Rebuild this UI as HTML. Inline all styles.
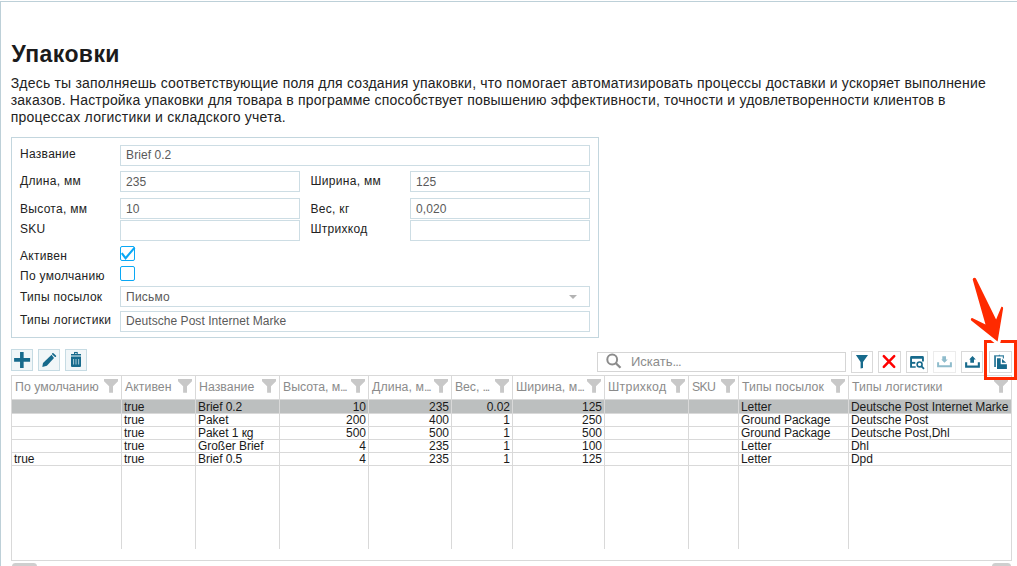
<!DOCTYPE html>
<html><head><meta charset="utf-8"><style>
html,body{margin:0;padding:0;}
body{width:1017px;height:566px;position:relative;overflow:hidden;background:#fff;font-family:"Liberation Sans", sans-serif;}
.t{position:absolute;white-space:nowrap;}
.r{position:absolute;}
</style></head><body>
<div class="r" style="left:0px;top:1px;width:1017px;height:1px;background:#bdd0d8;"></div>
<div class="r" style="left:0px;top:1px;width:1px;height:565px;background:#bdd0d8;"></div>
<div class="t" style="left:11.5px;top:42.53px;font-size:23px;line-height:23px;color:#1b1b1b;font-weight:bold;letter-spacing:0.4px;">Упаковки</div>
<div class="t" style="left:10.7px;top:75.65px;font-size:14px;line-height:14px;color:#222;letter-spacing:0.203px;">Здесь ты заполняешь соответствующие поля для создания упаковки, что помогает автоматизировать процессы доставки и ускоряет выполнение</div>
<div class="t" style="left:10.7px;top:92.65px;font-size:14px;line-height:14px;color:#222;letter-spacing:0.184px;">заказов. Настройка упаковки для товара в программе способствует повышению эффективности, точности и удовлетворенности клиентов в</div>
<div class="t" style="left:10.7px;top:109.65px;font-size:14px;line-height:14px;color:#222;letter-spacing:0.24px;">процессах логистики и складского учета.</div>
<div class="r" style="left:11px;top:137px;width:588px;height:201px;border:1px solid #c3d6de;box-sizing:border-box;"></div>
<div class="t" style="left:20px;top:147.94px;font-size:12px;line-height:12px;color:#222;letter-spacing:0.3px;">Название</div>
<div class="t" style="left:20px;top:175.44px;font-size:12px;line-height:12px;color:#222;letter-spacing:0.3px;">Длина, мм</div>
<div class="t" style="left:20px;top:202.64px;font-size:12px;line-height:12px;color:#222;letter-spacing:0.3px;">Высота, мм</div>
<div class="t" style="left:20px;top:223.14px;font-size:12px;line-height:12px;color:#222;letter-spacing:0.3px;">SKU</div>
<div class="t" style="left:20px;top:250.34px;font-size:12px;line-height:12px;color:#222;letter-spacing:0.3px;">Активен</div>
<div class="t" style="left:20px;top:270.04px;font-size:12px;line-height:12px;color:#222;letter-spacing:0.3px;">По умолчанию</div>
<div class="t" style="left:20px;top:290.54px;font-size:12px;line-height:12px;color:#222;letter-spacing:0.3px;">Типы посылок</div>
<div class="t" style="left:20px;top:314.44px;font-size:12px;line-height:12px;color:#222;letter-spacing:0.3px;">Типы логистики</div>
<div class="t" style="left:310.5px;top:175.44px;font-size:12px;line-height:12px;color:#222;letter-spacing:0.3px;">Ширина, мм</div>
<div class="t" style="left:310.5px;top:202.64px;font-size:12px;line-height:12px;color:#222;letter-spacing:0.3px;">Вес, кг</div>
<div class="t" style="left:310.5px;top:223.14px;font-size:12px;line-height:12px;color:#222;letter-spacing:0.3px;">Штрихкод</div>
<div class="r" style="left:120px;top:145px;width:470px;height:21px;border:1px solid #cddde4;box-sizing:border-box;background:#fff;"></div><div class="t" style="left:126.1px;top:149.14px;font-size:12px;line-height:12px;color:#5a5a5a;letter-spacing:0.05px;">Brief 0.2</div>
<div class="r" style="left:120px;top:171px;width:180px;height:21px;border:1px solid #cddde4;box-sizing:border-box;background:#fff;"></div><div class="t" style="left:126.1px;top:176.14px;font-size:12px;line-height:12px;color:#5a5a5a;letter-spacing:0.05px;">235</div>
<div class="r" style="left:410px;top:171px;width:180px;height:21px;border:1px solid #cddde4;box-sizing:border-box;background:#fff;"></div><div class="t" style="left:416.1px;top:176.14px;font-size:12px;line-height:12px;color:#5a5a5a;letter-spacing:0.05px;">125</div>
<div class="r" style="left:120px;top:198px;width:180px;height:21px;border:1px solid #cddde4;box-sizing:border-box;background:#fff;"></div><div class="t" style="left:126.1px;top:202.84px;font-size:12px;line-height:12px;color:#5a5a5a;letter-spacing:0.05px;">10</div>
<div class="r" style="left:410px;top:198px;width:180px;height:21px;border:1px solid #cddde4;box-sizing:border-box;background:#fff;"></div><div class="t" style="left:416.1px;top:202.84px;font-size:12px;line-height:12px;color:#5a5a5a;letter-spacing:0.05px;">0,020</div>
<div class="r" style="left:120px;top:220px;width:180px;height:21px;border:1px solid #cddde4;box-sizing:border-box;background:#fff;"></div>
<div class="r" style="left:410px;top:220px;width:180px;height:21px;border:1px solid #cddde4;box-sizing:border-box;background:#fff;"></div>
<div class="r" style="left:120px;top:246px;width:15px;height:15px;border:1.5px solid #0aa8f5;box-sizing:border-box;border-radius:2px;background:#fff;"></div>
<svg class="r" style="left:120px;top:245px" width="16" height="16" viewBox="0 0 16 16"><path d="M1.8 8.2 L5.6 13.2 L14.6 2.6" fill="none" stroke="#0aa8f5" stroke-width="2.1"/></svg>
<div class="r" style="left:120px;top:266px;width:15px;height:15px;border:1.5px solid #0aa8f5;box-sizing:border-box;border-radius:2px;background:#fff;"></div>
<div class="r" style="left:120px;top:286px;width:470px;height:21px;border:1px solid #cddde4;box-sizing:border-box;background:#fff;"></div><div class="t" style="left:126.1px;top:290.94px;font-size:12px;line-height:12px;color:#5a5a5a;letter-spacing:0.2px;">Письмо</div>
<svg class="r" style="left:567px;top:293px" width="12" height="8" viewBox="0 0 12 8"><path d="M2 2 L10 2 L6 6 Z" fill="#b3b3b3"/></svg>
<div class="r" style="left:120px;top:311px;width:470px;height:21px;border:1px solid #cddde4;box-sizing:border-box;background:#fff;"></div><div class="t" style="left:126.1px;top:315.14px;font-size:12px;line-height:12px;color:#5a5a5a;letter-spacing:0.05px;">Deutsche Post Internet Marke</div>
<div class="r" style="left:11px;top:349px;width:22px;height:22px;border:1px solid #c6dbe3;box-sizing:border-box;background:#f1f6f8;"></div>
<div class="r" style="left:38px;top:349px;width:22px;height:22px;border:1px solid #c6dbe3;box-sizing:border-box;background:#f1f6f8;"></div>
<div class="r" style="left:65px;top:349px;width:22px;height:22px;border:1px solid #c6dbe3;box-sizing:border-box;background:#f1f6f8;"></div>
<svg class="r" style="left:11px;top:349px" width="22" height="22" viewBox="0 0 22 22"><path d="M3.1 10.9 H19.1 M10.85 3.1 V19.1" stroke="#176a8c" stroke-width="3.6" fill="none"/></svg>
<svg class="r" style="left:38px;top:349px" width="22" height="22" viewBox="0 0 22 22"><path d="M4.3 17.9 L5 14 L13.6 5.8 L16 9.1 L8.9 16.7 Z" fill="#176a8c"/><path d="M14.9 4.9 L17.3 7.1" stroke="#176a8c" stroke-width="1.8" stroke-linecap="round"/></svg>
<svg class="r" style="left:65px;top:349px" width="22" height="22" viewBox="0 0 22 22"><rect x="9.6" y="3.5" width="2.6" height="2" fill="none" stroke="#176a8c" stroke-width="1.1"/><rect x="6" y="5" width="10" height="1.5" fill="#176a8c"/><rect x="6" y="6.5" width="10" height="1.5" fill="#7fb0c2"/><path d="M6 8 H16 V17 Q16 17.9 15 17.9 H7 Q6 17.9 6 17 Z" fill="#176a8c"/><path d="M8.55 9.9 V15.6 M11 9.9 V15.6 M13.6 9.9 V15.6" stroke="#9cc3d1" stroke-width="1.1"/></svg>
<div class="r" style="left:596.5px;top:352px;width:249.5px;height:20px;border:1px solid #d5d5d5;box-sizing:border-box;background:#fff;"></div>
<svg class="r" style="left:604px;top:352px" width="20" height="18" viewBox="0 0 20 18"><circle cx="8.2" cy="7.5" r="4.9" fill="none" stroke="#8c8c8c" stroke-width="2"/><path d="M11.6 11 L16.5 15.8" stroke="#8c8c8c" stroke-width="2.3"/></svg>
<div class="t" style="left:631px;top:355.00px;font-size:13px;line-height:13px;color:#8c8c8c;">Искать<span style="letter-spacing:-0.9px">...</span></div>
<div class="r" style="left:851px;top:351px;width:22px;height:22px;border:1px solid #d9d9d9;box-sizing:border-box;background:#fff;"></div>
<div class="r" style="left:878px;top:351px;width:22.600000000000023px;height:22px;border:1px solid #d9d9d9;box-sizing:border-box;background:#fff;"></div>
<div class="r" style="left:906px;top:351px;width:22px;height:22px;border:1px solid #d9d9d9;box-sizing:border-box;background:#fff;"></div>
<div class="r" style="left:933px;top:351px;width:22.600000000000023px;height:22px;border:1px solid #ececec;box-sizing:border-box;background:#fff;"></div>
<div class="r" style="left:961px;top:351px;width:22.299999999999955px;height:22px;border:1px solid #d9d9d9;box-sizing:border-box;background:#fff;"></div>
<div class="r" style="left:989px;top:351px;width:22.700000000000045px;height:22px;border:1px solid #d9d9d9;box-sizing:border-box;background:#fff;"></div>
<svg class="r" style="left:851px;top:351px" width="22" height="22" viewBox="0 0 22 22"><path d="M4.9 4 H17 L12 11 V17 L9.6 17.6 V11 Z" fill="#176a8c"/></svg>
<svg class="r" style="left:878px;top:351px" width="22" height="22" viewBox="0 0 22 22"><path d="M5.8 5.2 L16.2 15.8 M16.2 5.2 L5.8 15.8" stroke="#ff0000" stroke-width="2.5" stroke-linecap="round"/></svg>
<svg class="r" style="left:906px;top:351px" width="22" height="22" viewBox="0 0 22 22"><path d="M4.1 16.7 V6.5 Q4.1 5.1 5.5 5.1 H16.5 Q17.9 5.1 17.9 6.5 V10.5 H16 V7.8 H6 V15.2 H9.7 V16.7 Z" fill="#176a8c"/><rect x="6" y="10.9" width="3.3" height="1.9" fill="#176a8c"/><circle cx="13.6" cy="13.4" r="2.45" fill="none" stroke="#176a8c" stroke-width="1.6"/><path d="M15.3 15.2 L18 17.9" stroke="#176a8c" stroke-width="1.8"/></svg>
<svg class="r" style="left:933px;top:351px" width="22" height="22" viewBox="0 0 22 22"><path d="M4.1 11.3 H6.1 V14.3 H16.9 V11.3 H18.9 V16.3 H4.1 Z" fill="#8fbccc"/><path d="M9.3 5.25 H13 V8.4 H14.8 L11.5 11.7 L8.2 8.4 H9.3 Z" fill="#8fbccc"/></svg>
<svg class="r" style="left:961px;top:351px" width="22" height="22" viewBox="0 0 22 22"><path d="M4.1 11.3 H6.2 V14.4 H16.8 V11.3 H18.9 V16.7 H4.1 Z" fill="#176a8c"/><path d="M11.5 5 L14.8 8.6 H13 V11.7 H9.3 V8.6 H8.2 Z" fill="#176a8c"/></svg>
<svg class="r" style="left:989px;top:351px" width="22" height="22" viewBox="0 0 22 22"><path d="M5.1 16 V4.2 H9.5 L10.3 3.6 L11.1 4.2 H15 V7.5 H13.8 V5.4 H7 V16 Z" fill="#3a82a0"/><path d="M8 7.2 H11.7 V13.2 H17.9 V17.9 H8 Z" fill="#176a8c"/><path d="M13 8 L17.2 11.7 H13 Z" fill="#176a8c"/></svg>
<div class="r" style="left:11px;top:375px;width:1001px;height:186px;border:1px solid #d9d9d9;box-sizing:border-box;background:#fff;"></div>
<div class="r" style="left:12px;top:399px;width:999px;height:1px;background:#d9d9d9;"></div>
<div class="r" style="left:12px;top:400px;width:999px;height:13px;background:#bcbfbf;"></div>
<div class="r" style="left:12px;top:413px;width:999px;height:1px;background:#d9d9d9;"></div>
<div class="r" style="left:12px;top:426px;width:999px;height:1px;background:#d9d9d9;"></div>
<div class="r" style="left:12px;top:439px;width:999px;height:1px;background:#d9d9d9;"></div>
<div class="r" style="left:12px;top:452px;width:999px;height:1px;background:#d9d9d9;"></div>
<div class="r" style="left:12px;top:465px;width:999px;height:1px;background:#d9d9d9;"></div>
<div class="r" style="left:121px;top:376px;width:1px;height:173px;background:#d9d9d9;"></div>
<div class="r" style="left:195px;top:376px;width:1px;height:173px;background:#d9d9d9;"></div>
<div class="r" style="left:279px;top:376px;width:1px;height:173px;background:#d9d9d9;"></div>
<div class="r" style="left:368px;top:376px;width:1px;height:173px;background:#d9d9d9;"></div>
<div class="r" style="left:451px;top:376px;width:1px;height:173px;background:#d9d9d9;"></div>
<div class="r" style="left:512px;top:376px;width:1px;height:173px;background:#d9d9d9;"></div>
<div class="r" style="left:604px;top:376px;width:1px;height:173px;background:#d9d9d9;"></div>
<div class="r" style="left:688px;top:376px;width:1px;height:173px;background:#d9d9d9;"></div>
<div class="r" style="left:738px;top:376px;width:1px;height:173px;background:#d9d9d9;"></div>
<div class="r" style="left:848px;top:376px;width:1px;height:173px;background:#d9d9d9;"></div>
<div class="t" style="left:15px;top:380.59px;font-size:12.3px;line-height:12.3px;color:#8b8b8b;letter-spacing:0.05px;">По умолчанию</div>
<svg class="r" style="left:104px;top:379px" width="14" height="14" viewBox="0 0 14 14"><path d="M0 0 H14 V2.3 L9 7.2 V13.8 H5.1 V7.2 L0 2.3 Z" fill="#c8c8c8"/></svg>
<div class="t" style="left:125px;top:380.59px;font-size:12.3px;line-height:12.3px;color:#8b8b8b;letter-spacing:0.05px;">Активен</div>
<svg class="r" style="left:178px;top:379px" width="14" height="14" viewBox="0 0 14 14"><path d="M0 0 H14 V2.3 L9 7.2 V13.8 H5.1 V7.2 L0 2.3 Z" fill="#c8c8c8"/></svg>
<div class="t" style="left:199px;top:380.59px;font-size:12.3px;line-height:12.3px;color:#8b8b8b;letter-spacing:0.05px;">Название</div>
<svg class="r" style="left:262px;top:379px" width="14" height="14" viewBox="0 0 14 14"><path d="M0 0 H14 V2.3 L9 7.2 V13.8 H5.1 V7.2 L0 2.3 Z" fill="#c8c8c8"/></svg>
<div class="t" style="left:283px;top:380.59px;font-size:12.3px;line-height:12.3px;color:#8b8b8b;letter-spacing:-0.05px;">Высота, м<span style="letter-spacing:-1.3px">...</span></div>
<svg class="r" style="left:351px;top:379px" width="14" height="14" viewBox="0 0 14 14"><path d="M0 0 H14 V2.3 L9 7.2 V13.8 H5.1 V7.2 L0 2.3 Z" fill="#c8c8c8"/></svg>
<div class="t" style="left:372px;top:380.59px;font-size:12.3px;line-height:12.3px;color:#8b8b8b;letter-spacing:0.1px;">Длина, м<span style="letter-spacing:-1.3px">...</span></div>
<svg class="r" style="left:434px;top:379px" width="14" height="14" viewBox="0 0 14 14"><path d="M0 0 H14 V2.3 L9 7.2 V13.8 H5.1 V7.2 L0 2.3 Z" fill="#c8c8c8"/></svg>
<div class="t" style="left:455px;top:380.59px;font-size:12.3px;line-height:12.3px;color:#8b8b8b;letter-spacing:-0.1px;">Вес, <span style="letter-spacing:-1.3px">...</span></div>
<svg class="r" style="left:495px;top:379px" width="14" height="14" viewBox="0 0 14 14"><path d="M0 0 H14 V2.3 L9 7.2 V13.8 H5.1 V7.2 L0 2.3 Z" fill="#c8c8c8"/></svg>
<div class="t" style="left:516px;top:380.59px;font-size:12.3px;line-height:12.3px;color:#8b8b8b;letter-spacing:0.05px;">Ширина, м<span style="letter-spacing:-1.3px">...</span></div>
<svg class="r" style="left:587px;top:379px" width="14" height="14" viewBox="0 0 14 14"><path d="M0 0 H14 V2.3 L9 7.2 V13.8 H5.1 V7.2 L0 2.3 Z" fill="#c8c8c8"/></svg>
<div class="t" style="left:608px;top:380.59px;font-size:12.3px;line-height:12.3px;color:#8b8b8b;letter-spacing:0.3px;">Штрихкод</div>
<svg class="r" style="left:671px;top:379px" width="14" height="14" viewBox="0 0 14 14"><path d="M0 0 H14 V2.3 L9 7.2 V13.8 H5.1 V7.2 L0 2.3 Z" fill="#c8c8c8"/></svg>
<div class="t" style="left:692px;top:380.59px;font-size:12.3px;line-height:12.3px;color:#8b8b8b;letter-spacing:-0.7px;">SKU</div>
<svg class="r" style="left:721px;top:379px" width="14" height="14" viewBox="0 0 14 14"><path d="M0 0 H14 V2.3 L9 7.2 V13.8 H5.1 V7.2 L0 2.3 Z" fill="#c8c8c8"/></svg>
<div class="t" style="left:742px;top:380.59px;font-size:12.3px;line-height:12.3px;color:#8b8b8b;letter-spacing:0.1px;">Типы посылок</div>
<svg class="r" style="left:831px;top:379px" width="14" height="14" viewBox="0 0 14 14"><path d="M0 0 H14 V2.3 L9 7.2 V13.8 H5.1 V7.2 L0 2.3 Z" fill="#c8c8c8"/></svg>
<div class="t" style="left:852px;top:380.59px;font-size:12.3px;line-height:12.3px;color:#8b8b8b;letter-spacing:0.1px;">Типы логистики</div>
<svg class="r" style="left:994px;top:379px" width="14" height="14" viewBox="0 0 14 14"><path d="M0 0 H14 V2.3 L9 7.2 V13.8 H5.1 V7.2 L0 2.3 Z" fill="#c8c8c8"/></svg>
<div class="t" style="left:124px;top:401.44px;font-size:12px;line-height:12px;color:#1a1a1a;letter-spacing:-0.05px;">true</div>
<div class="t" style="left:198px;top:401.44px;font-size:12px;line-height:12px;color:#1a1a1a;letter-spacing:-0.05px;">Brief 0.2</div>
<div class="t" style="right:651px;top:401.44px;font-size:12px;line-height:12px;color:#1a1a1a;">10</div>
<div class="t" style="right:568px;top:401.44px;font-size:12px;line-height:12px;color:#1a1a1a;">235</div>
<div class="t" style="right:507px;top:401.44px;font-size:12px;line-height:12px;color:#1a1a1a;">0.02</div>
<div class="t" style="right:415px;top:401.44px;font-size:12px;line-height:12px;color:#1a1a1a;">125</div>
<div class="t" style="left:741px;top:401.44px;font-size:12px;line-height:12px;color:#1a1a1a;letter-spacing:-0.05px;">Letter</div>
<div class="t" style="left:851px;top:401.44px;font-size:12px;line-height:12px;color:#1a1a1a;letter-spacing:-0.05px;">Deutsche Post Internet Marke</div>
<div class="t" style="left:124px;top:413.64px;font-size:12px;line-height:12px;color:#1a1a1a;letter-spacing:-0.05px;">true</div>
<div class="t" style="left:198px;top:413.64px;font-size:12px;line-height:12px;color:#1a1a1a;letter-spacing:-0.05px;">Paket</div>
<div class="t" style="right:651px;top:413.64px;font-size:12px;line-height:12px;color:#1a1a1a;">200</div>
<div class="t" style="right:568px;top:413.64px;font-size:12px;line-height:12px;color:#1a1a1a;">400</div>
<div class="t" style="right:507px;top:413.64px;font-size:12px;line-height:12px;color:#1a1a1a;">1</div>
<div class="t" style="right:415px;top:413.64px;font-size:12px;line-height:12px;color:#1a1a1a;">250</div>
<div class="t" style="left:741px;top:413.64px;font-size:12px;line-height:12px;color:#1a1a1a;letter-spacing:-0.05px;">Ground Package</div>
<div class="t" style="left:851px;top:413.64px;font-size:12px;line-height:12px;color:#1a1a1a;letter-spacing:-0.05px;">Deutsche Post</div>
<div class="t" style="left:124px;top:426.84px;font-size:12px;line-height:12px;color:#1a1a1a;letter-spacing:-0.05px;">true</div>
<div class="t" style="left:198px;top:426.84px;font-size:12px;line-height:12px;color:#1a1a1a;letter-spacing:-0.05px;">Paket 1 кg</div>
<div class="t" style="right:651px;top:426.84px;font-size:12px;line-height:12px;color:#1a1a1a;">500</div>
<div class="t" style="right:568px;top:426.84px;font-size:12px;line-height:12px;color:#1a1a1a;">500</div>
<div class="t" style="right:507px;top:426.84px;font-size:12px;line-height:12px;color:#1a1a1a;">1</div>
<div class="t" style="right:415px;top:426.84px;font-size:12px;line-height:12px;color:#1a1a1a;">500</div>
<div class="t" style="left:741px;top:426.84px;font-size:12px;line-height:12px;color:#1a1a1a;letter-spacing:-0.05px;">Ground Package</div>
<div class="t" style="left:851px;top:426.84px;font-size:12px;line-height:12px;color:#1a1a1a;letter-spacing:-0.05px;">Deutsche Post,Dhl</div>
<div class="t" style="left:124px;top:440.04px;font-size:12px;line-height:12px;color:#1a1a1a;letter-spacing:-0.05px;">true</div>
<div class="t" style="left:198px;top:440.04px;font-size:12px;line-height:12px;color:#1a1a1a;letter-spacing:-0.05px;">Großer Brief</div>
<div class="t" style="right:651px;top:440.04px;font-size:12px;line-height:12px;color:#1a1a1a;">4</div>
<div class="t" style="right:568px;top:440.04px;font-size:12px;line-height:12px;color:#1a1a1a;">235</div>
<div class="t" style="right:507px;top:440.04px;font-size:12px;line-height:12px;color:#1a1a1a;">1</div>
<div class="t" style="right:415px;top:440.04px;font-size:12px;line-height:12px;color:#1a1a1a;">100</div>
<div class="t" style="left:741px;top:440.04px;font-size:12px;line-height:12px;color:#1a1a1a;letter-spacing:-0.05px;">Letter</div>
<div class="t" style="left:851px;top:440.04px;font-size:12px;line-height:12px;color:#1a1a1a;letter-spacing:-0.05px;">Dhl</div>
<div class="t" style="left:14px;top:452.84px;font-size:12px;line-height:12px;color:#1a1a1a;letter-spacing:-0.05px;">true</div>
<div class="t" style="left:124px;top:452.84px;font-size:12px;line-height:12px;color:#1a1a1a;letter-spacing:-0.05px;">true</div>
<div class="t" style="left:198px;top:452.84px;font-size:12px;line-height:12px;color:#1a1a1a;letter-spacing:-0.05px;">Brief 0.5</div>
<div class="t" style="right:651px;top:452.84px;font-size:12px;line-height:12px;color:#1a1a1a;">4</div>
<div class="t" style="right:568px;top:452.84px;font-size:12px;line-height:12px;color:#1a1a1a;">235</div>
<div class="t" style="right:507px;top:452.84px;font-size:12px;line-height:12px;color:#1a1a1a;">1</div>
<div class="t" style="right:415px;top:452.84px;font-size:12px;line-height:12px;color:#1a1a1a;">125</div>
<div class="t" style="left:741px;top:452.84px;font-size:12px;line-height:12px;color:#1a1a1a;letter-spacing:-0.05px;">Letter</div>
<div class="t" style="left:851px;top:452.84px;font-size:12px;line-height:12px;color:#1a1a1a;letter-spacing:-0.05px;">Dpd</div>
<div class="r" style="left:12px;top:563px;width:25px;height:7px;background:#cfcfcf;border-radius:4px;"></div>
<div class="r" style="left:992px;top:563px;width:19px;height:7px;background:#cfcfcf;border-radius:4px;"></div>
<div class="r" style="left:984.2px;top:340.4px;width:33.299999999999955px;height:40.10000000000002px;border:3.2px solid #ff2a00;box-sizing:border-box;"></div>
<svg class="r" style="left:0;top:0" width="1017" height="566" viewBox="0 0 1017 566"><path d="M972.7 279.6 Q973 277 975.8 278.2 L996.1 319.5 L1001.4 306.8 Q1003.5 306.5 1003.1 308.6 L997.6 341.6 L971.2 320.5 Q970 318.5 972.2 318 L985.5 324.5 Z" fill="#ff2a00" stroke="#fff" stroke-width="6" stroke-linejoin="round" paint-order="stroke"/></svg>
</body></html>
